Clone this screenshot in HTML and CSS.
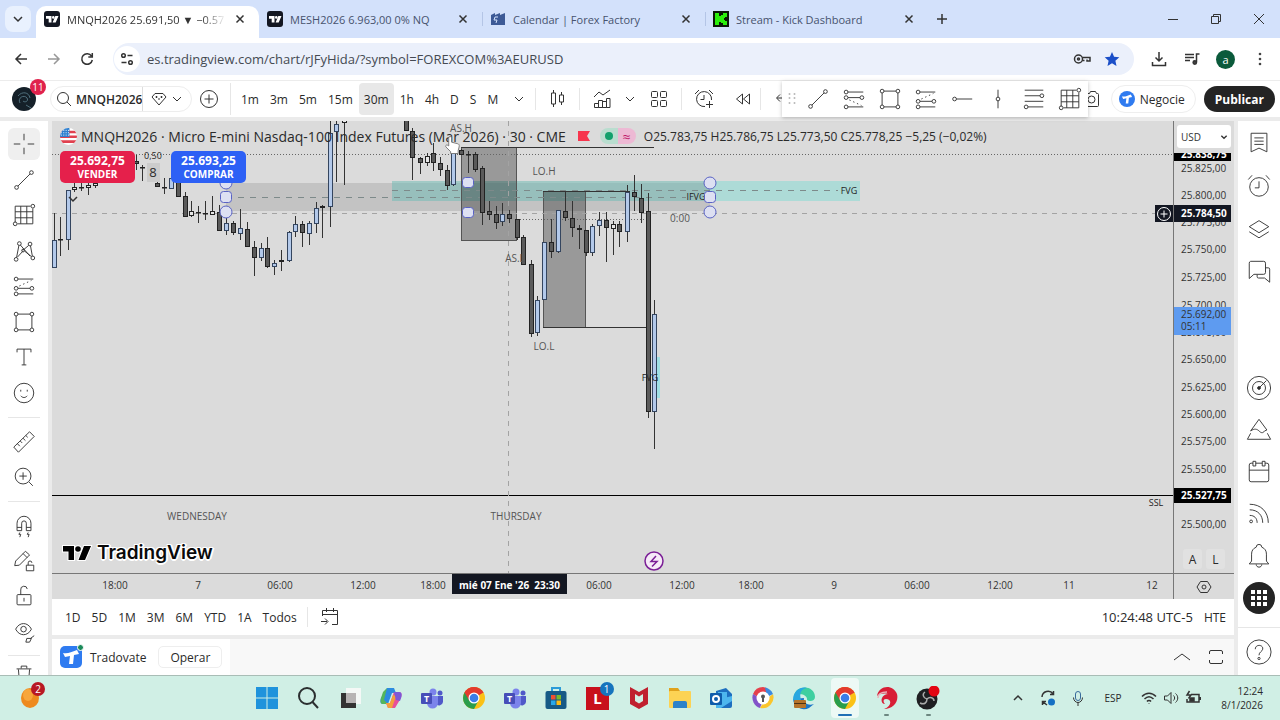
FILE: index.html
```html
<!DOCTYPE html>
<html lang="es">
<head>
  <meta charset="utf-8">
  <meta name="viewport" content="width=device-width, initial-scale=1">
  <title>MNQH2026 25.691,50 ▼ −0.57</title>
  <link rel="stylesheet" href="styles.css">
</head>
<body>
  <!-- shared icons -->
  <svg class="sprite" aria-hidden="true">
    <symbol id="i-chev" viewBox="0 0 12 12"><path d="M2 4l4 4 4-4"/></symbol>
    <symbol id="i-close" viewBox="0 0 12 12"><path d="M2.500 2.500l7 7M9.500 2.500l-7 7"/></symbol>
    <symbol id="i-tv" viewBox="0 0 16 16"><rect width="16" height="16" rx="3" fill="#131722"/><path fill="#fff" d="M2 5h5.500v6.500H4.700V7.800H2zM11.300 5H14.500l-2.800 6.500H8.600z"/><circle cx="9.300" cy="6.400" r="1.300" fill="#fff"/></symbol>
    <symbol id="i-trend" viewBox="0 0 28 28"><path d="M7.500 20.500l13-13"/><circle cx="6" cy="22" r="2"/><circle cx="22" cy="6" r="2"/></symbol>
    <symbol id="i-grid" viewBox="0 0 28 28"><path d="M4.500 22V4.500H21M23.500 7v16.500H7M10.500 4.500v19M17 4.500v19M4.500 10.500h19M4.500 17h19"/><circle cx="4.500" cy="23.500" r="2"/><circle cx="23.500" cy="4.500" r="2"/></symbol>
    <symbol id="i-rect" viewBox="0 0 28 28"><path d="M7.500 5.500h13M7.500 22.500h13M5.500 7.500v13M22.500 7.500v13"/><circle cx="5.500" cy="5.500" r="2"/><circle cx="22.500" cy="5.500" r="2"/><circle cx="5.500" cy="22.500" r="2"/><circle cx="22.500" cy="22.500" r="2"/></symbol>
    <symbol id="i-long" viewBox="0 0 28 28"><path d="M7.500 6.500H24M7.500 16.500h13M7.500 22.500H24"/><path stroke-dasharray="1.500 3" d="M9 14l13-6"/><circle cx="5.500" cy="6.500" r="2"/><circle cx="5.500" cy="16.500" r="2"/><circle cx="22.500" cy="16.500" r="2"/><circle cx="5.500" cy="22.500" r="2"/></symbol>
    <symbol id="i-short" viewBox="0 0 28 28"><path d="M7.500 6.500H24M7.500 12.500h13M7.500 22.500H24"/><path stroke-dasharray="1.500 3" d="M9 15l13 6"/><circle cx="5.500" cy="6.500" r="2"/><circle cx="5.500" cy="12.500" r="2"/><circle cx="22.500" cy="12.500" r="2"/><circle cx="5.500" cy="22.500" r="2"/></symbol>
    <symbol id="i-tradovate" viewBox="0 0 22 22"><path fill="#fff" d="M3 7c5 1 8-1 14-3l2 4-5 1-1 9h-4l1-8-5 1z"/></symbol>
    <symbol id="i-chrome" viewBox="0 0 24 24"><circle cx="12" cy="12" r="11" fill="#fbc116"/><path fill="#e33b2e" d="M12 12L2.500 6.500A11 11 0 0 1 21.500 6.500z"/><path fill="#2a9d4c" d="M12 12L2.500 6.500A11 11 0 0 0 12 23l4.500-8.500z"/><path fill="#e33b2e" d="M2.500 6.500L7.500 15 12 7h9.500A11 11 0 0 0 2.500 6.500z"/><circle cx="12" cy="12" r="5.500" fill="#fff"/><circle cx="12" cy="12" r="4.300" fill="#3b7de8"/></symbol>
    <symbol id="i-teams" viewBox="0 0 24 24"><circle cx="13" cy="6" r="3.500" fill="#7b83eb"/><circle cx="20" cy="7" r="2.500" fill="#5059c9"/><path fill="#5059c9" d="M16 10h7v6a4 4 0 0 1-7 2z"/><path fill="#7b83eb" d="M7 10h11v7a5.500 5.500 0 0 1-11 0z"/><rect x="1" y="7" width="11" height="11" rx="1" fill="#464eb8"/><text x="6.500" y="16" font-size="9" font-weight="700" text-anchor="middle" fill="#fff">T</text></symbol>
  </svg>

  <header class="tabs">
    <button class="tab-search" aria-label="Buscar pestañas"><svg class="ico s12 bold"><use href="#i-chev"/></svg></button>
    <div class="tab active">
      <svg class="favicon"><use href="#i-tv"/></svg>
      <span class="tab-title fade">MNQH2026 25.691,50 ▼ −0.57</span>
      <button aria-label="Cerrar"><svg class="ico s12 bold"><use href="#i-close"/></svg></button>
    </div>
    <div class="tab">
      <svg class="favicon"><use href="#i-tv"/></svg>
      <span class="tab-title">MESH2026 6.963,00 0% NQ</span>
      <button aria-label="Cerrar"><svg class="ico s12 bold"><use href="#i-close"/></svg></button>
    </div>
    <div class="tab split">
      <svg class="favicon" viewBox="0 0 16 16"><path fill="#3d5a96" d="M1 4l4-2v2l5-2v2l5-2v12H1z"/><path stroke="#d3e1fb" fill="none" d="M8 6H5l-1 3h3l-1 3"/></svg>
      <span class="tab-title">Calendar | Forex Factory</span>
      <button aria-label="Cerrar"><svg class="ico s12 bold"><use href="#i-close"/></svg></button>
    </div>
    <div class="tab split">
      <svg class="favicon" viewBox="0 0 16 16"><rect width="16" height="16" fill="#0b1a08"/><path fill="#2bf00c" d="M2 2h4v3h2V4h2V2h4v4h-2v1h-1v2h1v1h2v4h-4v-2H8v-1H6v3H2z"/></svg>
      <span class="tab-title">Stream - Kick Dashboard</span>
      <button aria-label="Cerrar"><svg class="ico s12 bold"><use href="#i-close"/></svg></button>
    </div>
    <button class="new-tab" aria-label="Nueva pestaña"><svg class="ico s12 bold" viewBox="0 0 12 12"><path d="M6 1v10M1 6h10"/></svg></button>
    <div class="win-buttons">
      <button aria-label="Minimizar"><svg class="ico s12" viewBox="0 0 12 12"><path d="M1 6.500h10"/></svg></button>
      <button aria-label="Restaurar"><svg class="ico s12" viewBox="0 0 12 12"><path d="M1.500 3.500h7v7h-7zM3.500 3.500v-2h7v7h-2"/></svg></button>
      <button aria-label="Cerrar ventana"><svg class="ico s12" viewBox="0 0 12 12"><path d="M1 1l10 10M11 1L1 11"/></svg></button>
    </div>
  </header>

  <div class="address">
    <button aria-label="Atrás"><svg class="ico s16 bold" viewBox="0 0 16 16"><path d="M14 8H3M8 3L3 8l5 5"/></svg></button>
    <button aria-label="Adelante" disabled><svg class="ico s16 bold" viewBox="0 0 16 16"><path d="M2 8h11M8 3l5 5-5 5"/></svg></button>
    <button aria-label="Recargar"><svg class="ico s16 bold" viewBox="0 0 16 16"><path d="M12.500 5A5.300 5.300 0 1 0 13.300 9M13.300 2v4H9.300"/></svg></button>
    <div class="omnibox">
      <button class="site-info" aria-label="Información del sitio"><svg class="ico s16 bold" viewBox="0 0 16 16"><circle cx="4.500" cy="4.500" r="1.800"/><path d="M8.500 4.500h5M2.500 11.500h5"/><circle cx="11.500" cy="11.500" r="1.800"/></svg></button>
      <input type="text" aria-label="Dirección" value="es.tradingview.com/chart/rJFyHida/?symbol=FOREXCOM%3AEURUSD">
      <button aria-label="Contraseñas"><svg class="ico s18 bold" viewBox="0 0 18 18"><circle cx="5.500" cy="9" r="4"/><circle cx="5.500" cy="9" r="1"/><path d="M9.500 7.500H17v3.500h-3v-1.500M9.500 10.500h2"/></svg></button>
      <button aria-label="Favorito"><svg class="s16" viewBox="0 0 16 16"><path fill="#1b4fc8" d="M8 1l2.100 4.800 5.200.5-3.900 3.500 1.100 5.100L8 12.200l-4.500 2.700 1.100-5.100L.7 6.300l5.200-.5z"/></svg></button>
    </div>
    <button aria-label="Descargas"><svg class="ico s16 bold" viewBox="0 0 16 16"><path d="M8 1v9M4.500 6.500L8 10l3.500-3.500M1.500 11v3.500h13V11"/></svg></button>
    <button aria-label="Multimedia"><svg class="ico s16 bold" viewBox="0 0 16 16"><path d="M1 3.500h9M1 6.500h9M1 9.500h5M12.500 11V3H15.500"/><circle cx="10.800" cy="11.500" r="1.700" fill="#444"/></svg></button>
    <button class="profile">a</button>
    <button aria-label="Menú"><svg class="s16" viewBox="0 0 16 16" fill="#444"><circle cx="8" cy="3" r="1.300"/><circle cx="8" cy="8" r="1.300"/><circle cx="8" cy="13" r="1.300"/></svg></button>
  </div>

  <nav class="topbar">
    <button class="user" aria-label="Menú de usuario">
      <svg viewBox="0 0 24 24"><circle cx="12" cy="12" r="12" fill="#152029"/><path fill="none" stroke="#50707d" d="M6 9c4-5 11-4 12 2M8 16c-3-5 4-9 7-5 2 3-2 5-4 3M14 18l5 3"/></svg>
      <span class="count">11</span>
    </button>
    <div class="symbol-box">
      <button class="symbol"><svg class="ico s16" viewBox="0 0 16 16"><circle cx="7" cy="7" r="5.500"/><path d="M11 11l4 4"/></svg><span>MNQH2026</span></button>
      <button class="symbol-more" aria-label="Sectores"><svg class="ico s16" viewBox="0 0 16 16"><path d="M4 2.500h8L15 6l-7 8L1 6zM4.500 6h2M9.500 6h2M5.500 5v2M10.500 5v2M8 7v2"/></svg><svg class="ico s12"><use href="#i-chev"/></svg></button>
    </div>
    <button class="add" aria-label="Comparar"><svg class="ico s20" viewBox="0 0 20 20"><circle cx="10" cy="10" r="8.500"/><path d="M10 5.500v9M5.500 10h9"/></svg></button>
    <div class="intervals">
      <button>1m</button><button>3m</button><button>5m</button><button>15m</button><button class="on">30m</button><button>1h</button><button>4h</button><button>D</button><button>S</button><button>M</button>
      <button class="more" aria-label="Más intervalos"><svg class="ico s12"><use href="#i-chev"/></svg></button>
    </div>
    <button class="tool sep" aria-label="Velas"><svg class="ico s20" viewBox="0 0 20 20"><path d="M5.500 1v3M5.500 15v3M3.500 4h4v11h-4zM13.500 3v3M13.500 13v3M11.500 6h4v7h-4z"/></svg></button>
    <button class="tool sep" aria-label="Indicadores"><svg class="ico s20" viewBox="0 0 20 20"><path d="M2 8l5-5 4 3 7-5M2.500 18.500v-4h4v4zM6.500 18.500v-7h4v7zM10.500 18.500v-6h4v6zM14.500 18.500V9.500h3.500v9z"/></svg></button>
    <button class="mini" aria-label="Favoritos"><svg class="ico s12"><use href="#i-chev"/></svg></button>
    <button class="tool" aria-label="Plantillas"><svg class="ico s20" viewBox="0 0 20 20"><rect x="2.500" y="2.500" width="6" height="6" rx="1"/><rect x="11.500" y="2.500" width="6" height="6" rx="1"/><rect x="2.500" y="11.500" width="6" height="6" rx="1"/><rect x="11.500" y="11.500" width="6" height="6" rx="1"/></svg></button>
    <button class="tool sep" aria-label="Alerta"><svg class="ico s20" viewBox="0 0 20 20"><path d="M17.500 11A7.500 7.500 0 1 0 11 17.500M10 6v4.500H6.500M1 5l4-4M15 1l4 4M15.500 12v7M12 15.500h7"/></svg></button>
    <button class="replay" aria-label="Reproducción"><svg class="ico s16" viewBox="0 0 16 16"><path d="M7.500 3v10L1.500 8zM14.500 3v10l-6-5z"/></svg></button>
    <button class="tool sep" aria-label="Deshacer"><svg class="ico s16" viewBox="0 0 16 16"><path d="M15 7H2M5 3.500L1.500 7 5 10.500"/></svg></button>

    <div class="drawbar">
      <svg class="s16 grip" viewBox="0 0 16 16" fill="#b8b8b8"><circle cx="5.500" cy="3" r="1"/><circle cx="10.500" cy="3" r="1"/><circle cx="5.500" cy="7" r="1"/><circle cx="10.500" cy="7" r="1"/><circle cx="5.500" cy="12" r="1"/><circle cx="10.500" cy="12" r="1"/></svg>
      <button aria-label="Línea de tendencia"><svg class="ico s26"><use href="#i-trend"/></svg></button>
      <button aria-label="Posición corta"><svg class="ico s26"><use href="#i-short"/></svg></button>
      <button aria-label="Rectángulo"><svg class="ico s26"><use href="#i-rect"/></svg></button>
      <button aria-label="Posición larga"><svg class="ico s26"><use href="#i-long"/></svg></button>
      <button aria-label="Rayo horizontal"><svg class="ico s26" viewBox="0 0 28 28"><circle cx="6" cy="14" r="2"/><path d="M8 14h17"/></svg></button>
      <button aria-label="Línea vertical"><svg class="ico s26" viewBox="0 0 28 28"><circle cx="14" cy="14" r="2"/><path d="M14 4v8M14 16v8"/></svg></button>
      <button aria-label="Retroceso de Fibonacci"><svg class="ico s26" viewBox="0 0 28 28"><path d="M4 4.500h20M4 10.500h16.500M4 16.500h20M7.500 22.500H24"/><circle cx="22.500" cy="10.500" r="2"/><circle cx="5.500" cy="22.500" r="2"/></svg></button>
      <button aria-label="Caja de Gann"><svg class="ico s26"><use href="#i-grid"/></svg></button>
    </div>

    <div class="topbar-right">
      <button aria-label="Captura"><svg class="ico s20" viewBox="0 0 20 20"><path d="M2.500 4.500h4l1-2h5l1 2h1a1 1 0 0 1 1 1v11a1 1 0 0 1-1 1h-12z"/><circle cx="8.500" cy="10.500" r="3.500"/></svg></button>
      <button class="trade"><span class="round-logo"><svg><use href="#i-tradovate"/></svg></span>Negocie</button>
      <button class="publish">Publicar</button>
    </div>
  </nav>

  <main class="workspace">
    <aside class="rail left">
      <div class="group first">
        <button class="on" aria-label="Cursor"><svg class="ico s26" viewBox="0 0 28 28"><path d="M14 3v7M14 18v7M3 14h7M18 14h7"/></svg></button>
        <button aria-label="Líneas"><svg class="ico s26"><use href="#i-trend"/></svg></button>
        <button aria-label="Gann y Fibonacci"><svg class="ico s26"><use href="#i-grid"/></svg></button>
        <button aria-label="Patrones"><svg class="ico s26" viewBox="0 0 28 28"><path d="M6 21L8.500 8M10 7.500l10.500 12M12.500 13.500L19 8M7 20.500l5.500-6M21 8.500l2 11M14.500 14l7.500 6"/><circle cx="9" cy="6" r="2"/><circle cx="5.500" cy="23" r="2"/><circle cx="13" cy="13.500" r="1.500"/><circle cx="20.500" cy="6.500" r="2"/><circle cx="23.500" cy="21.500" r="2"/></svg></button>
        <button aria-label="Predicción"><svg class="ico s26"><use href="#i-long"/></svg></button>
        <button aria-label="Formas"><svg class="ico s26"><use href="#i-rect"/></svg></button>
        <button aria-label="Texto"><svg class="ico s26" viewBox="0 0 28 28"><path d="M6.500 9V5.500h15V9M14 5.500v17M11.500 22.500h5"/></svg></button>
        <button aria-label="Iconos"><svg class="ico s26" viewBox="0 0 28 28"><circle cx="14" cy="14" r="10.500"/><path d="M10.500 10.500v2M17.500 10.500v2M10.500 17c2 2.500 5 2.500 7 0"/></svg></button>
      </div>
      <div class="group">
        <button aria-label="Medir"><svg class="ico s26" viewBox="0 0 28 28"><path d="M3 19.500L20 3l5 5L8 25zM7 16l2.500 2.500M10 13l2 2M13 10l2.500 2.500M16 7l2 2"/></svg></button>
        <button aria-label="Zoom"><svg class="ico s26" viewBox="0 0 28 28"><circle cx="13" cy="13" r="8.500"/><path d="M19.500 19.500l4 4M13 9v8M9 13h8"/></svg></button>
      </div>
      <div class="group last">
        <button aria-label="Imán"><svg class="ico s26" viewBox="0 0 28 28"><path d="M6.500 19V11a7.500 7.500 0 0 1 15 0v8h-5v-8a2.500 2.500 0 0 0-5 0v8zM6.500 15.500h5M16.500 15.500h5M9.500 21l-1 2h2l-1 3M18.500 21l-1 2h2l-1 3"/></svg></button>
        <button aria-label="Modo dibujo"><svg class="ico s26" viewBox="0 0 28 28"><path d="M4 19l1-5L15.500 3.500l4.500 4L9 18.500zM13 6l4.500 4.500M16.500 18.500h8v6h-8zM18.500 18.500v-2.500a2 2 0 0 1 4 0"/></svg></button>
        <button aria-label="Bloquear"><svg class="ico s26" viewBox="0 0 28 28"><rect x="6.500" y="12.500" width="15" height="11" rx="1"/><path d="M10.500 12.500V7.500a3.500 3.500 0 0 1 7-1M14 16v4"/></svg></button>
        <button aria-label="Ocultar"><svg class="ico s26" viewBox="0 0 28 28"><path d="M5 12c4-8 13-8 17 0-4 8-13 8-17 0z"/><circle cx="13.500" cy="12" r="3"/><path d="M16 26l1-4h5l-2 4zM21 22l4-3"/></svg></button>
      </div>
      <div class="group cut">
        <button aria-label="Eliminar"><svg class="ico s26" viewBox="0 0 28 28"><path d="M6 8.500h16M11 8V5.500h6V8M8 9l1 13h10l1-13"/></svg></button>
      </div>
    </aside>

    <section class="center">
      <div class="chart">
        <div class="pane">
          <svg class="canvas" id="plot">
            <g transform="translate(-52 -121)">
              <rect x="226" y="183" width="484" height="28" fill="#c3c3c3"/>
              <rect x="392" y="181" width="468" height="20" fill="#7fdbd4" opacity=".5"/>
              <rect x="392" y="181" width="318" height="20" fill="#555" opacity=".12"/>
              <rect x="655" y="357" width="5" height="41" fill="#9fdfe3"/>
              <rect class="box" x="461.500" y="147.500" width="55" height="93"/>
              <rect class="box" x="543.500" y="191.500" width="42" height="136"/>
              <path class="solid" d="M461 147.500H654M543 191.500H630M543 327.500H647"/>
              <path class="solid ssl" d="M52 495.500H1173"/>
              <path class="dots" d="M52 154.500H1173M517 219.500H652"/>
              <path class="dashes" d="M392 190.500H838M226 197.500H686"/>
              <path class="dashes cross" d="M52 213.500H1155M508.500 121V573"/>
              <g id="candles"></g>
              <g class="notes">
                <text x="461" y="132">AS.H</text>
                <text x="515" y="262">AS.L</text>
                <text x="544" y="175">LO.H</text>
                <text x="544" y="350">LO.L</text>
                <text x="680" y="222">0:00</text>
                <text x="197" y="520">WEDNESDAY</text>
                <text x="516" y="520">THURSDAY</text>
                <text class="tiny" x="696" y="200">IFVG</text>
                <text class="tiny" x="849" y="194">FVG</text>
                <text class="tiny" x="650" y="381">FVG</text>
                <text class="tiny" x="1156" y="506">SSL</text>
              </g>
              <g class="handles">
                <circle cx="226" cy="183" r="6"/><rect x="220.500" y="191.500" width="11" height="11" rx="3"/><circle cx="226" cy="212" r="6"/>
                <circle cx="710" cy="183" r="6"/><rect x="704.500" y="191.500" width="11" height="11" rx="3"/><circle cx="710" cy="212" r="6"/>
                <rect x="462.500" y="177.500" width="11" height="10" rx="3"/><rect x="462.500" y="207.500" width="11" height="10" rx="3"/>
              </g>
              <g class="event"><circle cx="654" cy="561" r="9"/><path d="M656 556l-5 5.500h6l-5 5"/></g>
            </g>
          </svg>
          <div class="legend">
            <svg class="flag" viewBox="0 0 18 18"><clipPath id="round"><circle cx="9" cy="9" r="9"/></clipPath><g clip-path="url(#round)"><rect width="18" height="18" fill="#fff"/><path fill="#e0414f" d="M0 3h18v2.500H0zM0 8h18v2.500H0zM0 13h18v3H0z"/><rect width="10" height="9.500" fill="#2d7fd0"/><path stroke="#fff" stroke-dasharray="1 1.500" d="M1 2.500h9M1 5h9M1 7.500h9"/></g></svg>
            <h1>MNQH2026 · Micro E-mini Nasdaq-100 Index Futures (Mar 2026) · 30 · CME</h1>
            <svg class="s12 mark" viewBox="0 0 12 12"><path fill="#f7354d" d="M0 1h12L9 6l3 5H0z"/></svg>
            <span class="status"><i class="live"><b></b></i><i class="approx">≈</i></span>
            <span class="ohlc">O25.783,75 H25.786,75 L25.773,50 C25.778,25 −5,25 (−0,02%)</span>
          </div>
          <div class="orders">
            <button class="sell">25.692,75<span>VENDER</span></button>
            <div class="qty"><span>0,50</span><b>8</b></div>
            <button class="buy">25.693,25<span>COMPRAR</span></button>
          </div>
          <button class="fold" aria-label="Ocultar leyenda"><svg class="ico s12 bold"><use href="#i-chev"/></svg></button>
          <button class="add-at-price" aria-label="Añadir en el precio"><svg class="s16" viewBox="0 0 16 16"><circle cx="8" cy="8" r="6.500"/><path d="M4.500 8h7M8 4.500v7"/></svg></button>
          <svg class="hand" viewBox="0 0 18 20"><path fill="#fff" stroke="#777" d="M5 10V2.500a1.500 1.500 0 0 1 3 0V7l6 1.500c2 .5 2.500 1.500 2 3.500L15 16v3H7v-2L2 12c-1-1.500 1-3 3-1z"/></svg>
          <a class="brand" href="#"><svg viewBox="0 0 28 16"><path d="M0 1h11v14H5.500V6.500H0zM21 1h7l-6 14h-6.500z"/><circle cx="15" cy="4" r="2.800"/></svg>TradingView</a>
        </div>

        <div class="price-axis">
          <svg class="canvas" id="prices"></svg>
          <select aria-label="Divisa"><option>USD</option></select>
          <svg class="ico select-chev"><use href="#i-chev"/></svg>
          <div class="scale-mode"><button>A</button><button>L</button></div>
        </div>
        <div class="time-axis"><svg class="canvas" id="times"></svg></div>
        <button class="axis-settings" aria-label="Ajustes"><svg class="ico s16" viewBox="0 0 16 16"><path d="M4.500 2.500h7L15 8l-3.500 5.500h-7L1 8z"/><circle cx="8" cy="8" r="2"/></svg></button>
      </div>

      <div class="range-bar">
        <button>1D</button><button>5D</button><button>1M</button><button>3M</button><button>6M</button><button>YTD</button><button>1A</button><button>Todos</button>
        <button class="goto" aria-label="Ir a fecha"><svg class="ico s20" viewBox="0 0 20 20"><path d="M2.500 9V3.500h15v14H12M2.500 7.500h15M6.500 1v4M13.500 1v4M1 14.500h6M5 11.500l3 3-3 3"/></svg></button>
        <button class="clock">10:24:48 UTC-5</button>
        <button>HTE</button>
      </div>

      <div class="broker-bar">
        <div class="broker">
          <span class="square-logo"><svg><use href="#i-tradovate"/></svg><i></i></span>
          <span class="broker-name">Tradovate</span>
          <button>Operar</button>
        </div>
        <div class="broker-actions">
          <button aria-label="Abrir panel"><svg class="ico s18" viewBox="0 0 18 18"><path d="M1 12l8-6 8 6"/></svg></button>
          <button aria-label="Maximizar"><svg class="ico s18" viewBox="0 0 18 18"><path d="M2.500 6V4a1.500 1.500 0 0 1 1.500-1.500h10A1.500 1.500 0 0 1 15.500 4v2M2.500 12v2A1.500 1.500 0 0 0 4 15.500h10a1.500 1.500 0 0 0 1.500-1.500v-2"/></svg></button>
        </div>
      </div>
    </section>

    <aside class="rail right">
      <div class="group">
        <button aria-label="Lista"><svg class="ico s26" viewBox="0 0 28 28"><path d="M5.500 3.500h17v20l-8.500-4-8.500 4zM9 8.500h10M9 12h10M9 15.500h10"/></svg></button>
        <button aria-label="Alertas"><svg class="ico s26" viewBox="0 0 28 28"><circle cx="14" cy="15" r="10"/><path d="M14 9v7H9.500M2.500 7l4-4.500M25.500 7l-4-4.500"/></svg></button>
        <button aria-label="Capas"><svg class="ico s26" viewBox="0 0 28 28"><path d="M14 5l10.500 6.500L14 18 3.500 11.500zM3.500 17L14 23.500 24.500 17"/></svg></button>
        <button aria-label="Chats"><svg class="ico s26" viewBox="0 0 28 28"><path d="M5 2.500h14a2 2 0 0 1 2 2v10a2 2 0 0 1-2 2H8.500L3.500 21V4.500a2 2 0 0 1 1.500-2zM12 17v2a1.500 1.500 0 0 0 1.500 1.500H20l5.500 4.500V11a1.500 1.500 0 0 0-1.500-1.500h-3"/></svg></button>
      </div>
      <div class="group bottom">
        <button aria-label="Analizador"><svg class="ico s26" viewBox="0 0 28 28"><circle cx="14" cy="14" r="12.500"/><circle cx="14" cy="14" r="7"/><path d="M14 14l8-8"/><circle cx="14" cy="14" r="1.500" fill="#222"/></svg></button>
        <button aria-label="Pine"><svg class="ico s26" viewBox="0 0 28 28"><path d="M14 2.500L5 15c4-3 7-2 9 0s4 3 6 0l2.500-1zM5 17.500L1.500 24h25L23 17.500"/></svg></button>
        <button aria-label="Calendario"><svg class="ico s26" viewBox="0 0 28 28"><rect x="3.500" y="4.500" width="21" height="20" rx="2"/><path fill="#fff" d="M3.500 12h21M7.500 2.500h3v5h-3zM17.500 2.500h3v5h-3z"/></svg></button>
        <button aria-label="Noticias"><svg class="ico s26" viewBox="0 0 28 28"><path d="M4 3.500c12 0 20 8 20 20M4 9.500c9 0 14 6 14 14M4 15.500c5 0 8 3 8 8"/><circle cx="5.500" cy="22" r="1.500"/></svg></button>
        <button aria-label="Notificaciones"><svg class="ico s26" viewBox="0 0 28 28"><path d="M3.500 22.500l2.500-3V12a8 8 0 0 1 5-7.500 3 3 0 0 1 6 0 8 8 0 0 1 5 7.500v7.500l2.500 3zM11 23c0 4 6 4 6 0"/></svg></button>
        <button aria-label="Productos"><svg class="s32" viewBox="0 0 32 32"><circle cx="16" cy="16" r="16" fill="#242424"/><path fill="#fff" d="M8 8h4v4H8zM14 8h4v4h-4zM20 8h4v4h-4zM8 14h4v4H8zM14 14h4v4h-4zM20 14h4v4h-4zM8 20h4v4H8zM14 20h4v4h-4zM20 20h4v4h-4z"/></svg></button>
        <button class="help" aria-label="Ayuda"><svg class="ico s26" viewBox="0 0 28 28"><circle cx="14" cy="14" r="13"/><path d="M10 11c0-6 9-5 8 0-.5 2.500-4 3-4 6.500"/><circle cx="14" cy="21" r="1.200"/></svg></button>
      </div>
    </aside>
  </main>

  <footer class="taskbar">
    <button class="weather" aria-label="Widgets"><svg viewBox="0 0 24 24"><ellipse cx="11" cy="12" rx="9" ry="10" fill="#ee8a1e"/><ellipse cx="9" cy="9" rx="5" ry="6" fill="#f7a63c"/></svg><span>2</span></button>
    <div class="apps">
      <button aria-label="Inicio"><svg viewBox="0 0 24 24"><path fill="#1f93dc" d="M1 1h10.500v10.500H1zM12.500 1H23v10.500H12.500zM1 12.500h10.500V23H1zM12.500 12.500H23V23H12.500z"/></svg></button>
      <button aria-label="Buscar"><svg viewBox="0 0 24 24" fill="none" stroke="#2b2f30" stroke-width="2"><circle cx="11" cy="10" r="8"/><path d="M16.500 16l5.500 6"/></svg></button>
      <button aria-label="Vista de tareas"><svg viewBox="0 0 24 24"><rect x="8" y="2" width="15" height="16" fill="#f4f8f6"/><rect x="3" y="7" width="15" height="15" fill="#333"/><rect x="8" y="7" width="10" height="10" fill="#b7b4b4"/></svg></button>
      <button aria-label="Copilot"><svg viewBox="0 0 24 24"><path fill="#2c8be0" d="M8 2h7l2 5h-4L9 18H4c-3 0-3-3-2-6z"/><path fill="#54b65b" d="M2 12l2-6 4-4-3 12 4 4H4c-2 0-3-2-2-6z"/><path fill="#e84f9b" d="M16 22H9l-2-5h4l4-11h5c3 0 3 3 2 6z"/><path fill="#f4a03c" d="M11 17l3-8 3 1-4 12H9l-2-5z"/><path fill="#7c58d8" d="M15 6h5c3 0 3 3 2 6l-1 3-4-1z"/></svg></button>
      <button aria-label="Teams"><svg><use href="#i-teams"/></svg></button>
      <button aria-label="Chrome"><svg><use href="#i-chrome"/></svg></button>
      <button aria-label="Teams personal"><svg><use href="#i-teams"/></svg></button>
      <button aria-label="Store"><svg viewBox="0 0 24 24"><path fill="none" stroke="#2b9bd8" stroke-width="2" d="M8 6V2h8v4"/><rect x="1.500" y="5" width="21" height="18" rx="2" fill="#175a86"/><path fill="#f05030" d="M7 9h4.500v4.500H7z"/><path fill="#7cba2a" d="M12.500 9H17v4.500h-4.500z"/><path fill="#28a8ea" d="M7 14.500h4.500V19H7z"/><path fill="#fdbc14" d="M12.500 14.500H17V19h-4.500z"/></svg></button>
      <button class="letter" aria-label="L"><span>L</span><i>1</i></button>
      <button aria-label="McAfee"><svg viewBox="0 0 24 24"><path fill="#c0202f" d="M3 1l9 5 9-5v17l-9 5-9-5z"/><path fill="#d0efe5" d="M8 8l4 2.500L16 8v7l-4 2.500L8 15z"/></svg></button>
      <button aria-label="Explorador"><svg viewBox="0 0 24 24"><path fill="#e0a21c" d="M1 2h9l2 3v4H1z"/><rect x="1" y="5" width="22" height="17" rx="1" fill="#fcd354"/><path fill="#2d82c8" d="M5 22v-5a2 2 0 0 1 2-2h10a2 2 0 0 1 2 2v5z"/></svg></button>
      <button aria-label="Outlook"><svg viewBox="0 0 24 24"><path fill="#1d6fc0" d="M7 5l10-3 6 6v12a2 2 0 0 1-2 2H7z"/><path fill="#4db6ee" d="M9 6h9v8H9zM7 14l16-4v5L12 22H7z"/><rect x="1" y="7" width="12" height="12" rx="1" fill="#0f5cab"/><circle cx="7" cy="13" r="3" fill="none" stroke="#fff" stroke-width="2"/></svg></button>
      <button aria-label="Contraseñas"><svg viewBox="0 0 24 24"><path fill="#e5404c" d="M12 1a11 11 0 0 0-10 7l6 4 8-4V2z"/><path fill="#8253c8" d="M2 8a11 11 0 0 0 7 14l3-8z"/><path fill="#fbc52c" d="M9 22A11 11 0 0 0 22 8l-8 6z"/><path fill="#3c8ae0" d="M14 1.500A11 11 0 0 1 22 8l-6 3z"/><circle cx="12" cy="12" r="6.500" fill="#fff"/><circle cx="12" cy="10.500" r="2" fill="#555"/><path stroke="#555" stroke-width="2" d="M12 11v5"/></svg></button>
      <button aria-label="Edge"><svg viewBox="0 0 24 24"><path fill="#1a76c8" d="M1 13a11 11 0 0 0 16 9l5-4c-6 2-11-1-10-6z"/><path fill="#3fcfa0" d="M2 10C4-2 23-1 23 11c0 4-5 5-8 3 1-5-7-8-13-4z"/><path fill="#2aa7e0" d="M1 14C1 4 10 0 15 2c-6 1-8 5-6 12z"/><rect x="2" y="14" width="12" height="8" rx="1" fill="#b5732a"/><path stroke="#4f3010" d="M2 17.500h12"/></svg></button>
      <button class="running active" aria-label="Chrome en uso"><svg><use href="#i-chrome"/></svg></button>
      <button class="running" aria-label="Grabador"><svg viewBox="0 0 24 24"><path fill="#d81e36" d="M2 10C4-1 18-2 22 8c2 8-4 15-13 15 8-3 8-10 2-10-3 0-3 3-1 5-5 0-5-9 3-10-5-1-9 0-11 2z"/><path fill="none" stroke="#e9b3bb" stroke-width="1.500" d="M3 12c0-4 4-6 9-6"/></svg></button>
      <button class="running rec" aria-label="OBS"><svg viewBox="0 0 24 24"><circle cx="11" cy="13" r="10.500" fill="#1f1f22"/><path fill="none" stroke="#aaa" stroke-width="1.500" d="M11 13c-4-1-5-5-2-7M11 13c3-3 7-1 7 2M11 13c0 4-3 6-7 4"/><circle cx="18" cy="5" r="5.500" fill="#e30613"/></svg></button>
    </div>
    <div class="tray">
      <button aria-label="Iconos ocultos"><svg class="ico s12 bold" viewBox="0 0 12 12"><path d="M2 8l4-4 4 4"/></svg></button>
      <button aria-label="Actualización"><svg class="ico s16 bold" viewBox="0 0 16 16"><path d="M2 7a6 6 0 0 1 11-3M13.500 1v3.500H10M2.500 15v-3.500H6M3 12l4 3"/><circle cx="11.500" cy="12" r="3.500" fill="#1570c4" stroke="none"/></svg></button>
      <button aria-label="Micrófono"><svg class="ico s16" viewBox="0 0 16 16"><rect x="5.500" y="1.500" width="5" height="9" rx="2.500" stroke="#396b9c"/><path d="M3.500 7.500a4.500 5 0 0 0 9 0M8 12.500V16"/></svg></button>
      <button class="lang">ESP</button>
      <button class="net" aria-label="Red y sonido">
        <svg class="ico s16 bold" viewBox="0 0 16 16"><path d="M1 6.500c4-4.500 10-4.500 14 0M3.500 9c3-3 6-3 9 0M6 11.500c1-1.500 3-1.500 4 0M8 13.500v.5"/></svg>
        <svg class="ico s16" viewBox="0 0 16 16"><path d="M1.500 6h3L8 2.500v11L4.500 10h-3zM10.500 5.500c1.500 1.500 1.500 3.500 0 5M12.500 3.500c3 2.500 3 6.500 0 9"/></svg>
        <svg class="ico s16 bold" viewBox="0 0 16 16"><path d="M6 4.500h8v7.500H2V9M15.500 7v3M4.500 1L2 5h4L3.500 8.500"/><path fill="#333" d="M5 8h4v3H5z"/></svg>
      </button>
      <div class="datetime"><time>12:24</time><time>8/1/2026</time></div>
    </div>
  </footer>

  <script>
    const NS = 'http://www.w3.org/2000/svg';

    // x, high, body top, body bottom, low, direction
    const candles = [
      [54, 213, 240, 268, 268, 'u'], [60, 217, 239, 240, 256, 'd'], [68, 190, 190, 240, 250, 'u'],
      [74, 182, 187, 190, 192, 'n'], [81, 182, 187, 188, 191, 'd'], [88, 181, 185, 188, 195, 'n'],
      [95, 178, 183, 186, 188, 'n'], [136, 155, 161, 164, 170, 'd'], [142, 165, 167, 167, 181, 'd'],
      [157, 172, 183, 187, 187, 'd'], [164, 178, 187, 188, 194, 'd'], [171, 170, 178, 189, 189, 'u'],
      [178, 180, 181, 197, 197, 'd'], [185, 192, 196, 217, 217, 'd'], [191, 201, 211, 216, 217, 'n'],
      [198, 206, 212, 213, 223, 'd'], [205, 201, 213, 214, 220, 'd'], [212, 196, 211, 215, 215, 'n'],
      [219, 205, 212, 231, 231, 'd'], [226, 218, 223, 231, 235, 'u'], [233, 221, 223, 233, 235, 'd'],
      [240, 209, 228, 234, 240, 'u'], [247, 222, 229, 247, 247, 'd'], [254, 241, 247, 258, 276, 'd'],
      [261, 243, 248, 258, 261, 'u'], [267, 237, 248, 267, 268, 'd'], [274, 260, 263, 267, 275, 'u'],
      [281, 250, 260, 262, 271, 'n'], [289, 231, 232, 261, 262, 'u'], [295, 216, 224, 232, 237, 'u'],
      [302, 221, 224, 233, 247, 'd'], [309, 221, 223, 234, 245, 'u'], [316, 202, 208, 224, 233, 'u'],
      [322, 205, 206, 208, 238, 'n'], [330, 121, 133, 207, 227, 'u'], [336, 121, 124, 132, 182, 'u'],
      [344, 118, 119, 123, 185, 'n'], [406, 118, 119, 131, 131, 'd'], [412, 128, 131, 158, 180, 'd'],
      [420, 157, 158, 163, 174, 'd'], [427, 153, 156, 163, 166, 'n'], [433, 143, 153, 163, 171, 'd'],
      [440, 157, 163, 170, 176, 'd'], [447, 165, 170, 186, 190, 'd'], [453, 150, 150, 185, 186, 'u'],
      [461, 149, 150, 155, 155, 'd'], [468, 151, 154, 155, 173, 'd'], [475, 152, 154, 170, 172, 'd'],
      [482, 166, 168, 213, 225, 'd'], [489, 201, 211, 215, 220, 'd'], [496, 206, 214, 223, 229, 'd'],
      [502, 203, 214, 222, 226, 'u'], [509, 210, 214, 219, 223, 'd'], [517, 219, 219, 238, 240, 'd'],
      [523, 235, 237, 265, 265, 'd'], [531, 260, 264, 334, 337, 'd'], [537, 296, 300, 333, 336, 'u'],
      [544, 242, 242, 300, 300, 'u'], [551, 219, 242, 252, 258, 'd'], [558, 210, 210, 252, 253, 'u'],
      [565, 192, 211, 218, 221, 'd'], [572, 201, 218, 228, 237, 'd'], [579, 225, 228, 230, 249, 'd'],
      [586, 230, 230, 253, 256, 'd'], [592, 224, 226, 253, 256, 'u'], [599, 212, 220, 226, 236, 'u'],
      [606, 212, 220, 228, 262, 'd'], [613, 221, 224, 229, 255, 'n'], [619, 221, 224, 232, 247, 'd'],
      [627, 185, 192, 232, 242, 'u'], [634, 175, 192, 197, 211, 'd'], [641, 184, 198, 213, 223, 'd'],
      [648, 193, 211, 412, 418, 'd'], [654, 300, 314, 412, 449, 'u']
    ];

    const priceLabels = [
      ['25.825,00', 47], ['25.800,00', 74], ['25.775,00', 101], ['25.750,00', 128], ['25.725,00', 156],
      ['25.700,00', 184], ['25.675,00', 211], ['25.650,00', 238], ['25.625,00', 266], ['25.600,00', 293],
      ['25.575,00', 320], ['25.550,00', 348], ['25.500,00', 403]
    ];

    const timeLabels = [
      ['18:00', 63], ['7', 146], ['06:00', 228], ['12:00', 311], ['18:00', 381], ['06:00', 547],
      ['12:00', 630], ['18:00', 699], ['9', 782], ['06:00', 865], ['12:00', 948], ['11', 1017], ['12', 1100]
    ];

    function add(parent, tag, attrs, text) {
      const el = document.createElementNS(NS, tag);
      for (const key in attrs) el.setAttribute(key, attrs[key]);
      if (text) el.textContent = text;
      parent.appendChild(el);
    }

    function drawCandles() {
      const g = document.getElementById('candles');
      candles.forEach(([x, hi, top, bottom, lo, dir]) => {
        add(g, 'path', { class: 'wick', d: `M${x + .5} ${hi}V${top}M${x + .5} ${bottom}V${lo}` });
        add(g, 'rect', { class: 'body ' + dir, x: x - 1.5, y: top + .5, width: 4, height: Math.max(bottom - top - 1, .5) });
      });
    }

    function drawPrices() {
      const svg = document.getElementById('prices');
      priceLabels.forEach(([label, y]) => add(svg, 'text', { x: 7, y: y + 4 }, label));
      const tag = (y, h, cls) => add(svg, 'rect', { x: 0, y: y, width: 57, height: h, class: cls });
      tag(25, 15, 'tag-black');
      add(svg, 'text', { x: 7, y: 37, class: 'light' }, '25.838,75');
      tag(0, 32, 'header');
      tag(84, 17, 'tag-dark');
      add(svg, 'text', { x: 7, y: 96, class: 'light' }, '25.784,50');
      tag(186, 28, 'tag-blue');
      add(svg, 'text', { x: 7, y: 197 }, '25.692,00');
      add(svg, 'text', { x: 7, y: 209 }, '05:11');
      tag(367, 15, 'tag-black');
      add(svg, 'text', { x: 7, y: 378, class: 'light' }, '25.527,75');
    }

    function drawTimes() {
      const svg = document.getElementById('times');
      timeLabels.forEach(([label, x]) => add(svg, 'text', { x: x, y: 15, 'text-anchor': 'middle' }, label));
      add(svg, 'rect', { x: 400, y: 0, width: 115, height: 20, class: 'tag-dark' });
      add(svg, 'text', { x: 407, y: 15, class: 'light' }, "mié 07 Ene '26");
      add(svg, 'text', { x: 508, y: 15, class: 'light', 'text-anchor': 'end' }, '23:30');
    }

    drawCandles();
    drawPrices();
    drawTimes();
  </script>
</body>
</html>
```
FILE: styles.css
```css
* {
  box-sizing: border-box;
}
body {
  margin: 0;
  height: 100vh;
  display: flex;
  flex-direction: column;
  overflow: hidden;
  font-family: "Open Sans", "Noto Sans", sans-serif;
  font-size: 12px;
  color: #2a2a2a;
  background: #fff;
}
button {
  display: flex;
  align-items: center;
  justify-content: center;
  flex: none;
  border: 0;
  padding: 0;
  background: none;
  font: inherit;
  color: inherit;
  cursor: pointer;
}
svg {
  display: block;
  flex: none;
}
i {
  font-style: normal;
}
.sprite {
  position: absolute;
  width: 0;
  height: 0;
}
.ico {
  fill: none;
  stroke: #333;
}
.bold {
  stroke-width: 1.5;
}
.s12 { width: 12px; height: 12px; }
.s16 { width: 16px; height: 16px; }
.s18 { width: 18px; height: 18px; }
.s20 { width: 20px; height: 20px; }
.s26 { width: 26px; height: 26px; }
.s32 { width: 32px; height: 32px; }

/* browser tabs */
.tabs {
  display: flex;
  align-items: center;
  flex: none;
  height: 38px;
  background: #d3e1fb;
}
.tab-search {
  width: 26px;
  height: 26px;
  margin: 0 5px;
  border-radius: 8px;
  background: #e9f1fe;
}
.tab {
  display: flex;
  align-items: center;
  width: 223px;
  height: 32px;
  margin-top: 6px;
  padding: 0 13px 6px 8px;
  color: #47536e;
}
.tab.active {
  border-radius: 10px 10px 0 0;
  background: #fff;
  color: #333;
}
.tab.split {
  background: linear-gradient(#b4c5e6, #b4c5e6) 0 6px / 1px 14px no-repeat;
}
.favicon {
  width: 16px;
  height: 16px;
  margin-right: 7px;
}
.tab-title {
  flex: 1;
  overflow: hidden;
  white-space: nowrap;
  font-size: 11px;
}
.fade {
  margin-right: 8px;
  -webkit-mask-image: linear-gradient(to right, #000 85%, transparent);
  mask-image: linear-gradient(to right, #000 85%, transparent);
}
.new-tab {
  width: 28px;
  height: 28px;
}
.win-buttons {
  display: flex;
  margin-left: auto;
}
.win-buttons button {
  width: 43px;
  height: 36px;
}

/* address bar */
.address {
  display: flex;
  align-items: center;
  flex: none;
  height: 43px;
  padding: 0 4px;
  border-bottom: 1px solid #ececec;
}
.address button {
  width: 33px;
  height: 32px;
}
.address button:disabled {
  opacity: .5;
}
.omnibox {
  display: flex;
  align-items: center;
  flex: 1;
  height: 32px;
  margin: 0 8px 0 10px;
  padding: 0 7px 0 1px;
  border-radius: 16px;
  background: #ebf0fb;
}
.omnibox .site-info {
  width: 26px;
  height: 26px;
  border-radius: 13px;
  background: #fff;
}
.omnibox button {
  width: 30px;
}
.omnibox input {
  flex: 1;
  min-width: 0;
  border: 0;
  padding: 0 7px;
  background: none;
  font: inherit;
  font-size: 13px;
  color: #454a52;
}
.address .profile {
  width: 19px;
  height: 19px;
  margin: 0 8px;
  border-radius: 10px;
  background: #0b5a3b;
  color: #fff;
  font-size: 11px;
}

/* chart toolbar */
.topbar {
  position: relative;
  display: flex;
  align-items: center;
  flex: none;
  height: 36px;
  padding-right: 5px;
}
.user {
  position: relative;
  width: 24px;
  height: 24px;
  margin-left: 12px;
}
.user svg {
  width: 24px;
  height: 24px;
}
.count {
  position: absolute;
  top: -8px;
  right: -10px;
  min-width: 16px;
  padding: 0 2px;
  border-radius: 8px;
  background: #e0224c;
  color: #fff;
  font-size: 10px;
  line-height: 16px;
}
.symbol-box {
  display: flex;
  flex: none;
  width: 142px;
  height: 26px;
  margin-left: 14px;
  border: 1px solid #ededed;
  border-radius: 13px;
}
.symbol {
  gap: 4px;
  width: 92px;
  padding-left: 5px;
  justify-content: flex-start;
  overflow: hidden;
  border-right: 1px solid #ddd;
  font-weight: 600;
}
.symbol-more {
  flex: 1;
  gap: 4px;
}
.add {
  width: 34px;
}
.intervals {
  display: flex;
  flex: none;
  gap: 1px;
  margin-left: 4px;
  padding: 0 5px;
  border-left: 1px solid #e6e6e6;
}
.intervals button {
  height: 32px;
  padding: 0 5px;
  border-radius: 4px;
}
.intervals .on {
  background: #e8e8e8;
}
.intervals .more {
  margin-left: 4px;
}
.tool {
  width: 44px;
  height: 22px;
}
.sep {
  border-left: 1px solid #e6e6e6;
}
.mini {
  width: 14px;
}
.replay {
  width: 35px;
}
.drawbar {
  position: absolute;
  left: 782px;
  top: 0;
  z-index: 2;
  display: flex;
  align-items: center;
  height: 36px;
  padding-left: 2px;
  background: #fff;
  box-shadow: 0 1px 4px rgba(0, 0, 0, .25);
}
.drawbar button {
  width: 36px;
}
.topbar-right {
  display: flex;
  align-items: center;
  margin-left: auto;
}
.trade {
  gap: 5px;
  height: 28px;
  margin: 0 8px;
  padding: 0 10px 0 7px;
  border: 1px solid #eee;
  border-radius: 14px;
}
.round-logo {
  padding: 1px;
  border-radius: 8px;
  background: #2f7bf0;
}
.round-logo svg {
  width: 14px;
  height: 14px;
}
.publish {
  height: 26px;
  padding: 0 11px;
  border-radius: 13px;
  background: #242424;
  color: #fff;
  font-weight: 700;
}

/* workspace */
.workspace {
  display: flex;
  gap: 4px;
  flex: 1;
  min-height: 0;
  padding-top: 4px;
  background: #ebebeb;
}
.rail {
  display: flex;
  flex-direction: column;
  flex: none;
  overflow: hidden;
  background: #fff;
}
.left {
  width: 48px;
  padding: 7px 8px 0;
}
.left .group {
  display: flex;
  flex-direction: column;
  justify-content: space-between;
  flex: none;
  padding-bottom: 8px;
}
.left .group + .group {
  padding-top: 8px;
  border-top: 1px solid #e6e6e6;
}
.left button {
  height: 32px;
  border-radius: 6px;
}
.left .on {
  background: #efefef;
}
.left .first {
  height: 289px;
}
.left .group:nth-child(2) {
  height: 84px;
}
.left .last {
  height: 154px;
}
.left .group.cut {
  padding-top: 2px;
}
.right {
  width: 42px;
}
.right button {
  width: 42px;
  height: 43px;
}
.right .bottom {
  margin-top: auto;
}
.right .bottom button {
  height: 42px;
}
.right .bottom .help {
  height: 48px;
  margin-top: 8px;
  border-top: 1px solid #e6e6e6;
}
.center {
  display: flex;
  flex-direction: column;
  flex: 1;
  min-width: 0;
}

/* chart */
.chart {
  display: grid;
  grid-template-columns: 1fr 61px;
  grid-template-rows: 1fr 26px;
  flex: 1;
  min-height: 0;
  background: #dbdbdb;
}
.pane, .price-axis, .time-axis {
  position: relative;
  min-width: 0;
  min-height: 0;
  overflow: hidden;
}
.price-axis, .axis-settings {
  border-left: 1px solid #777;
}
.time-axis, .axis-settings {
  border-top: 1px solid #777;
}
.canvas {
  width: 100%;
  height: 100%;
}
.wick { stroke: #333; }
.body { stroke: #222; }
.u { fill: #b3c9ea; stroke: #34455f; }
.d { fill: #5a5a5a; }
.n { fill: #e6e6e6; }
.box {
  fill: rgba(0, 0, 0, .3);
  stroke: #555;
}
.solid {
  fill: none;
  stroke: #333;
}
.ssl {
  stroke: #000;
}
.dots {
  stroke: #666;
  stroke-dasharray: 1 2;
}
.dashes {
  stroke: #7d8a8a;
  stroke-dasharray: 6 6;
}
.cross {
  stroke: #a3a3a3;
  stroke-dasharray: 5 5;
}
.notes text {
  fill: #555;
  font-size: 10px;
  text-anchor: middle;
}
.notes .tiny {
  fill: #222;
  font-size: 9px;
}
.handles * {
  fill: #dde0f2;
  stroke: #5a63c4;
}
.event {
  fill: #f6eaf8;
  stroke: #7b1f96;
  stroke-width: 1.5;
}
.add-at-price {
  position: absolute;
  right: 0;
  top: 84px;
  width: 18px;
  height: 17px;
  background: #131722;
}
.add-at-price svg {
  fill: none;
  stroke: #fff;
}
.legend {
  position: absolute;
  left: 8px;
  top: 5px;
  display: flex;
  align-items: center;
  height: 20px;
  white-space: nowrap;
}
.flag {
  width: 17px;
  height: 17px;
  margin-right: 4px;
}
.legend h1 {
  margin: 0;
  font-size: 14px;
  font-weight: 400;
}
.mark {
  margin: 0 10px 0 12px;
}
.status {
  display: flex;
  margin-right: 8px;
  border-radius: 8px;
  overflow: hidden;
}
.status i {
  display: flex;
  align-items: center;
  justify-content: center;
  width: 18px;
  height: 16px;
}
.live {
  background: #b9ddcf;
}
.live b {
  width: 8px;
  height: 8px;
  border-radius: 4px;
  background: #12a06c;
}
.approx {
  background: #edb9d4;
  color: #c01a6c;
  font-size: 14px;
}
.orders {
  position: absolute;
  left: 8px;
  top: 30px;
  display: flex;
}
.sell, .buy {
  flex-direction: column;
  width: 75px;
  height: 32px;
  border-radius: 5px;
  color: #fff;
  font-weight: 700;
  line-height: 14px;
}
.orders button span {
  font-size: 10px;
  line-height: 12px;
}
.sell {
  background: #e5204b;
}
.buy {
  background: #2d60f5;
}
.qty {
  width: 36px;
  text-align: center;
  font-size: 9px;
  line-height: 10px;
}
.qty span {
  display: block;
}
.qty b {
  display: inline-block;
  width: 13px;
  margin-top: 2px;
  background: #ccc;
  font-size: 13px;
  font-weight: 400;
  line-height: 19px;
}
.fold {
  position: absolute;
  left: 15px;
  top: 72px;
}
.hand {
  position: absolute;
  left: 392px;
  top: 14px;
  width: 17px;
  height: 20px;
}
.brand {
  position: absolute;
  left: 11px;
  bottom: 6px;
  display: flex;
  align-items: center;
  gap: 6px;
  color: #0a0a0a;
  font-family: Inter, sans-serif;
  font-size: 19px;
  font-weight: 600;
  line-height: 28px;
  text-decoration: none;
  text-shadow: 1px 1px #fff, -1px -1px #fff, 1px -1px #fff, -1px 1px #fff, 0 2px #fff, 2px 0 #fff;
}
.brand svg {
  width: 28px;
  height: 16px;
  stroke: #fff;
  stroke-width: 2;
  paint-order: stroke;
  overflow: visible;
}
.price-axis text, .time-axis text {
  fill: #333;
  font-size: 10px;
}
.price-axis .light, .time-axis .light {
  fill: #fff;
  font-weight: 700;
}
.header { fill: #dbdbdb; }
.tag-black { fill: #000; }
.tag-dark { fill: #131722; }
.tag-blue { fill: #5e9bf0; }
.price-axis select {
  position: absolute;
  left: 3px;
  top: 4px;
  width: 54px;
  height: 23px;
  padding: 0 4px;
  border: 0;
  border-radius: 3px;
  background: #fff;
  appearance: none;
  font: inherit;
  font-size: 10px;
  color: #333;
}
.select-chev {
  position: absolute;
  right: 6px;
  top: 12px;
  width: 8px;
  height: 8px;
  stroke-width: 2;
}
.scale-mode {
  position: absolute;
  left: 9px;
  bottom: 4px;
  display: flex;
  gap: 4px;
}
.scale-mode button {
  width: 19px;
  height: 20px;
  border-radius: 3px;
  background: #e1e1e1;
}

/* bottom bars */
.range-bar {
  display: flex;
  align-items: center;
  gap: 1px;
  flex: none;
  height: 36px;
  padding: 0 3px 0 8px;
  background: #fff;
}
.range-bar button {
  padding: 0 5px;
}
.range-bar .goto {
  margin-left: 4px;
  padding: 0 0 0 12px;
  border-left: 1px solid #e6e6e6;
}
.range-bar .clock {
  margin-left: auto;
  font-size: 13px;
}
.broker-bar {
  display: flex;
  flex: none;
  justify-content: space-between;
  height: 36px;
  margin-top: 4px;
  background: #f8f8f8;
}
.broker {
  display: flex;
  align-items: center;
  padding: 0 8px;
  background: #fff;
}
.square-logo {
  position: relative;
  width: 22px;
  height: 22px;
  border-radius: 5px;
  background: #2f7bf0;
}
.square-logo svg {
  width: 22px;
  height: 22px;
}
.square-logo i {
  position: absolute;
  top: -2px;
  right: -2px;
  width: 7px;
  height: 7px;
  border: 1px solid #fff;
  border-radius: 4px;
  background: #1b8a5a;
}
.broker-name {
  margin: 0 12px 0 8px;
}
.broker button {
  height: 22px;
  padding: 0 11px;
  border: 1px solid #eee;
  border-radius: 5px;
}
.broker-actions {
  display: flex;
  gap: 16px;
  padding-right: 9px;
}

/* windows taskbar */
.taskbar {
  display: flex;
  align-items: center;
  flex: none;
  height: 45px;
  border-top: 1px solid #a9bdb6;
  background: #d0efe5;
}
.weather {
  position: relative;
  width: 24px;
  margin-left: 19px;
}
.weather svg, .apps svg {
  width: 24px;
  height: 24px;
}
.weather span, .letter i {
  position: absolute;
  top: -4px;
  right: -2px;
  width: 14px;
  border-radius: 7px;
  background: #b81824;
  color: #fff;
  font-size: 10px;
  line-height: 14px;
}
.apps {
  display: flex;
  justify-content: space-between;
  width: 689px;
  margin-left: 210px;
}
.apps button {
  position: relative;
  width: 28px;
  height: 40px;
}
.letter span {
  width: 23px;
  background: #c8101c;
  color: #fff;
  font-size: 15px;
  font-weight: 700;
  line-height: 23px;
}
.apps .letter i {
  top: 4px;
  background: #1674bd;
}
.running::after {
  content: "";
  position: absolute;
  bottom: 2px;
  width: 5px;
  height: 2px;
  border-radius: 1px;
  background: #6d8780;
}
.running.active {
  border-radius: 4px;
  background: #edf9f5;
}
.running.active::after {
  width: 14px;
  background: #1f6fb5;
}
.tray {
  display: flex;
  align-items: center;
  margin-left: auto;
  padding-right: 17px;
  font-size: 10px;
}
.tray button {
  width: 30px;
  height: 32px;
}
.tray .lang {
  width: 40px;
  margin-right: 7px;
}
.tray .net {
  gap: 6px;
  width: 62px;
}
.datetime {
  display: flex;
  flex-direction: column;
  width: 61px;
  text-align: right;
  line-height: 14px;
}
```
